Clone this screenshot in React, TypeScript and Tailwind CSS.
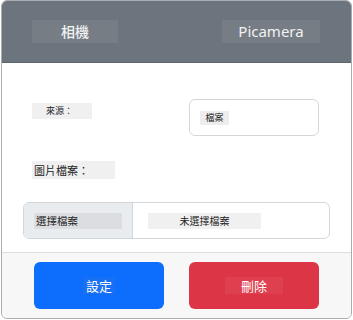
const cjk = { fontFamily: '"Noto Sans CJK TC", "Noto Sans", sans-serif' }

export default function App() {
  return (
    <div className="w-[353px] h-[320px] bg-white" style={cjk}>
      <div className="ml-[1px] w-[351px] h-[319px] border border-[#a9adb1] rounded-md overflow-hidden flex flex-col">
        <div className="h-[62px] bg-[#6c757d] border-b border-[#5e666d] flex items-center justify-between pl-[30px] pr-[31px]">
          <div className="w-[86px] h-[23px] bg-[#767d85] flex items-center justify-center text-[14px] font-medium text-[#f1f2f3]">
            相機
          </div>
          <div className="w-[98px] h-[23px] bg-[#767d85] flex items-center justify-center text-[15px] text-[#f1f2f3]" style={{ fontFamily: '"Noto Sans", sans-serif' }}>
            Picamera
          </div>
        </div>

        <div className="flex-1 flex flex-col">
          <div className="mt-[36px] flex items-start">
            <div className="ml-[30px] mt-[4px] w-[60px] h-[16px] bg-[#f0f0f0] flex items-center pl-[14px] text-[9px] text-[#222]">
              來源：
            </div>
            <div className="ml-auto mr-[32px] w-[130px] h-[37px] border border-[#d4d7da] rounded-md flex items-center">
              <div className="ml-[10px] w-[29px] h-[14px] bg-[#ededed] flex items-center justify-center text-[9px] text-[#222]">
                檔案
              </div>
            </div>
          </div>

          <div className="mt-[25px] ml-[30px] w-[83px] h-[18px] bg-[#f0f0f0] flex items-center pl-[2px] text-[11px] text-[#222]">
            圖片檔案：
          </div>

          <div className="mt-[23px] mx-[21px] h-[37px] border border-[#d4d7da] rounded-md overflow-hidden flex">
            <div className="w-[109px] bg-[#e9ecef] border-r border-[#d4d7da] flex items-center">
              <div className="ml-[10px] w-[88px] h-[16px] bg-[#dcdde0] flex items-center pl-[2px] text-[10.5px] text-[#222]">
                選擇檔案
              </div>
            </div>
            <div className="flex items-center">
              <div className="ml-[15px] w-[113px] h-[16px] bg-[#f0f0f0] flex items-center justify-center text-[10px] text-[#222]">
                未選擇檔案
              </div>
            </div>
          </div>
        </div>

        <div className="h-[66px] bg-[#f7f7f7] border-t border-[#dcdee0] flex items-center justify-between pl-[32px] pr-[32px]">
          <div className="w-[130px] h-[47px] rounded-md bg-[#0d6efd] flex items-center justify-center">
            <div className="w-[32px] h-[17px] bg-[#1870f5] flex items-center justify-center text-[13px] text-white">
              設定
            </div>
          </div>
          <div className="w-[130px] h-[47px] rounded-md bg-[#dc3545] flex items-center justify-center">
            <div className="w-[58px] h-[17px] bg-[#df404f] flex items-center justify-center text-[13px] text-white">
              刪除
            </div>
          </div>
        </div>
      </div>
    </div>
  )
}
